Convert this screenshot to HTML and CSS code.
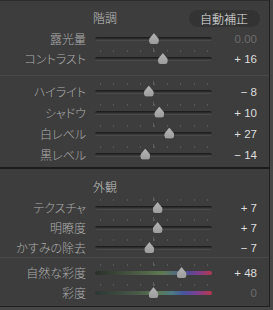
FILE: index.html
```html
<!DOCTYPE html>
<html lang="ja">
<head>
<meta charset="utf-8">
<link rel="stylesheet" href="styles.css">
</head>
<body>
<div class="panel">
  <section class="sec sec-tone">
    <div class="head">
      <span></span>
      <span class="head-title">階調</span>
      <span class="auto">自動補正</span>
    </div>
    <div class="row">
      <span class="label">露光量</span>
      <div class="track plain"><span class="thumb" style="left:50.4%"></span></div>
      <span class="val dim">0.00</span>
    </div>
    <div class="row">
      <span class="label">コントラスト</span>
      <div class="track"><span class="thumb" style="left:58%"></span></div>
      <span class="val">+ 16</span>
    </div>
  </section>
  <section class="sec sec-light">
    <div class="row tall">
      <span class="label">ハイライト</span>
      <div class="track"><span class="thumb" style="left:46%"></span></div>
      <span class="val">− 8</span>
    </div>
    <div class="row tall">
      <span class="label">シャドウ</span>
      <div class="track"><span class="thumb" style="left:55%"></span></div>
      <span class="val">+ 10</span>
    </div>
    <div class="row tall">
      <span class="label">白レベル</span>
      <div class="track"><span class="thumb" style="left:63.5%"></span></div>
      <span class="val">+ 27</span>
    </div>
    <div class="row tall">
      <span class="label">黒レベル</span>
      <div class="track"><span class="thumb" style="left:43%"></span></div>
      <span class="val">− 14</span>
    </div>
  </section>
  <section class="sec sec-look">
    <div class="head">
      <span></span>
      <span class="head-title">外観</span>
      <span></span>
    </div>
    <div class="row">
      <span class="label">テクスチャ</span>
      <div class="track"><span class="thumb" style="left:53.5%"></span></div>
      <span class="val">+ 7</span>
    </div>
    <div class="row">
      <span class="label">明瞭度</span>
      <div class="track"><span class="thumb" style="left:53.5%"></span></div>
      <span class="val">+ 7</span>
    </div>
    <div class="row">
      <span class="label">かすみの除去</span>
      <div class="track"><span class="thumb" style="left:46.5%"></span></div>
      <span class="val">− 7</span>
    </div>
  </section>
  <section class="sec sec-color">
    <div class="row">
      <span class="label">自然な彩度</span>
      <div class="track vib"><span class="thumb" style="left:74%"></span></div>
      <span class="val">+ 48</span>
    </div>
    <div class="row">
      <span class="label">彩度</span>
      <div class="track sat"><span class="thumb" style="left:50%"></span></div>
      <span class="val dim">0</span>
    </div>
  </section>
</div>
</body>
</html>
```
FILE: styles.css
```css
html, body {
  margin: 0;
  padding: 0;
  background: #474747;
}
body {
  width: 273px;
  height: 310px;
  overflow: hidden;
  font-family: "Noto Sans CJK JP", "Noto Sans", sans-serif;
  font-size: 12px;
  font-weight: 300;
  color: #acacac;
}
.panel {
  width: 269px;
  height: 305px;
  background: #3d3d3d;
  border-top: 1px solid #2c2c2c;
  border-right: 1px solid #1f1f1f;
  border-bottom: 1px solid #1f1f1f;
  display: flex;
  flex-direction: column;
}
.sec-tone {
  padding-top: 6px;
  height: 68px;
  border-bottom: 1px solid #4a4a4a;
}
.sec-light {
  padding-top: 5px;
  height: 86px;
  border-bottom: 2px solid #1b1b1b;
}
.sec-look {
  padding-top: 7px;
  height: 81px;
  border-bottom: 1px solid #4a4a4a;
}
.sec-color {
  padding-top: 5px;
}
.head {
  display: grid;
  grid-template-columns: 86px 1fr auto;
  column-gap: 7px;
  align-items: center;
  height: 22px;
  padding-right: 9px;
}
.head-title {
  color: #c0c0c0;
  line-height: 16px;
}
.auto {
  background: #333333;
  color: #e6e6e6;
  border-radius: 9px;
  height: 17px;
  line-height: 17px;
  padding: 0 12px 0 11px;
}
.row {
  display: grid;
  grid-template-columns: 86px 117px 36px;
  column-gap: 9px;
  align-items: center;
  height: 20px;
}
.row.tall {
  height: 21px;
}
.label {
  text-align: right;
  line-height: 16px;
  font-feature-settings: "palt";
  white-space: nowrap;
}
.val {
  text-align: right;
  color: #dedede;
  font-family: "Liberation Sans", sans-serif;
  font-weight: 400;
  font-size: 11.5px;
  line-height: 16px;
  white-space: nowrap;
}
.val.dim {
  color: #6c6c6c;
}
.track {
  position: relative;
  height: 4px;
  border-radius: 2px;
  background: linear-gradient(#181818, #2c2c2c 40%, #525252);
}
.track::before {
  content: "";
  position: absolute;
  left: 5px;
  width: 108.3px;
  top: -7px;
  height: 2px;
  background: repeating-linear-gradient(to right, #565656 0 1px, transparent 1px 13.4px);
}
.track::after {
  content: "";
  position: absolute;
  left: 58px;
  width: 1px;
  top: -9px;
  height: 4px;
  background: #5e5e5e;
}
.track.plain::before,
.track.plain::after {
  display: none;
}
.track.vib {
  background: linear-gradient(to right, #2a302a, #4a5a44 35%, #5f7a52 58%, #4f6a80 70%, #4a4e9a 78%, #7c3e8e 88%, #b23a4c);
}
.track.sat {
  background: linear-gradient(to right, #2c3634, #4a5848 35%, #5a7a54 55%, #4c7a86 66%, #4654a0 76%, #7d3f92 87%, #b8384a);
}
.thumb {
  position: absolute;
  top: -4px;
  width: 10px;
  height: 11px;
  margin-left: -5px;
  filter: drop-shadow(0 0 0.6px #1a1a1a);
}
.thumb::before {
  content: "";
  position: absolute;
  inset: 0;
  background: linear-gradient(#b4b4b4, #9c9c9c);
  clip-path: polygon(50% 0, 95% 50%, 100% 70%, 92% 95%, 75% 100%, 25% 100%, 8% 95%, 0 70%, 5% 50%);
}
```
